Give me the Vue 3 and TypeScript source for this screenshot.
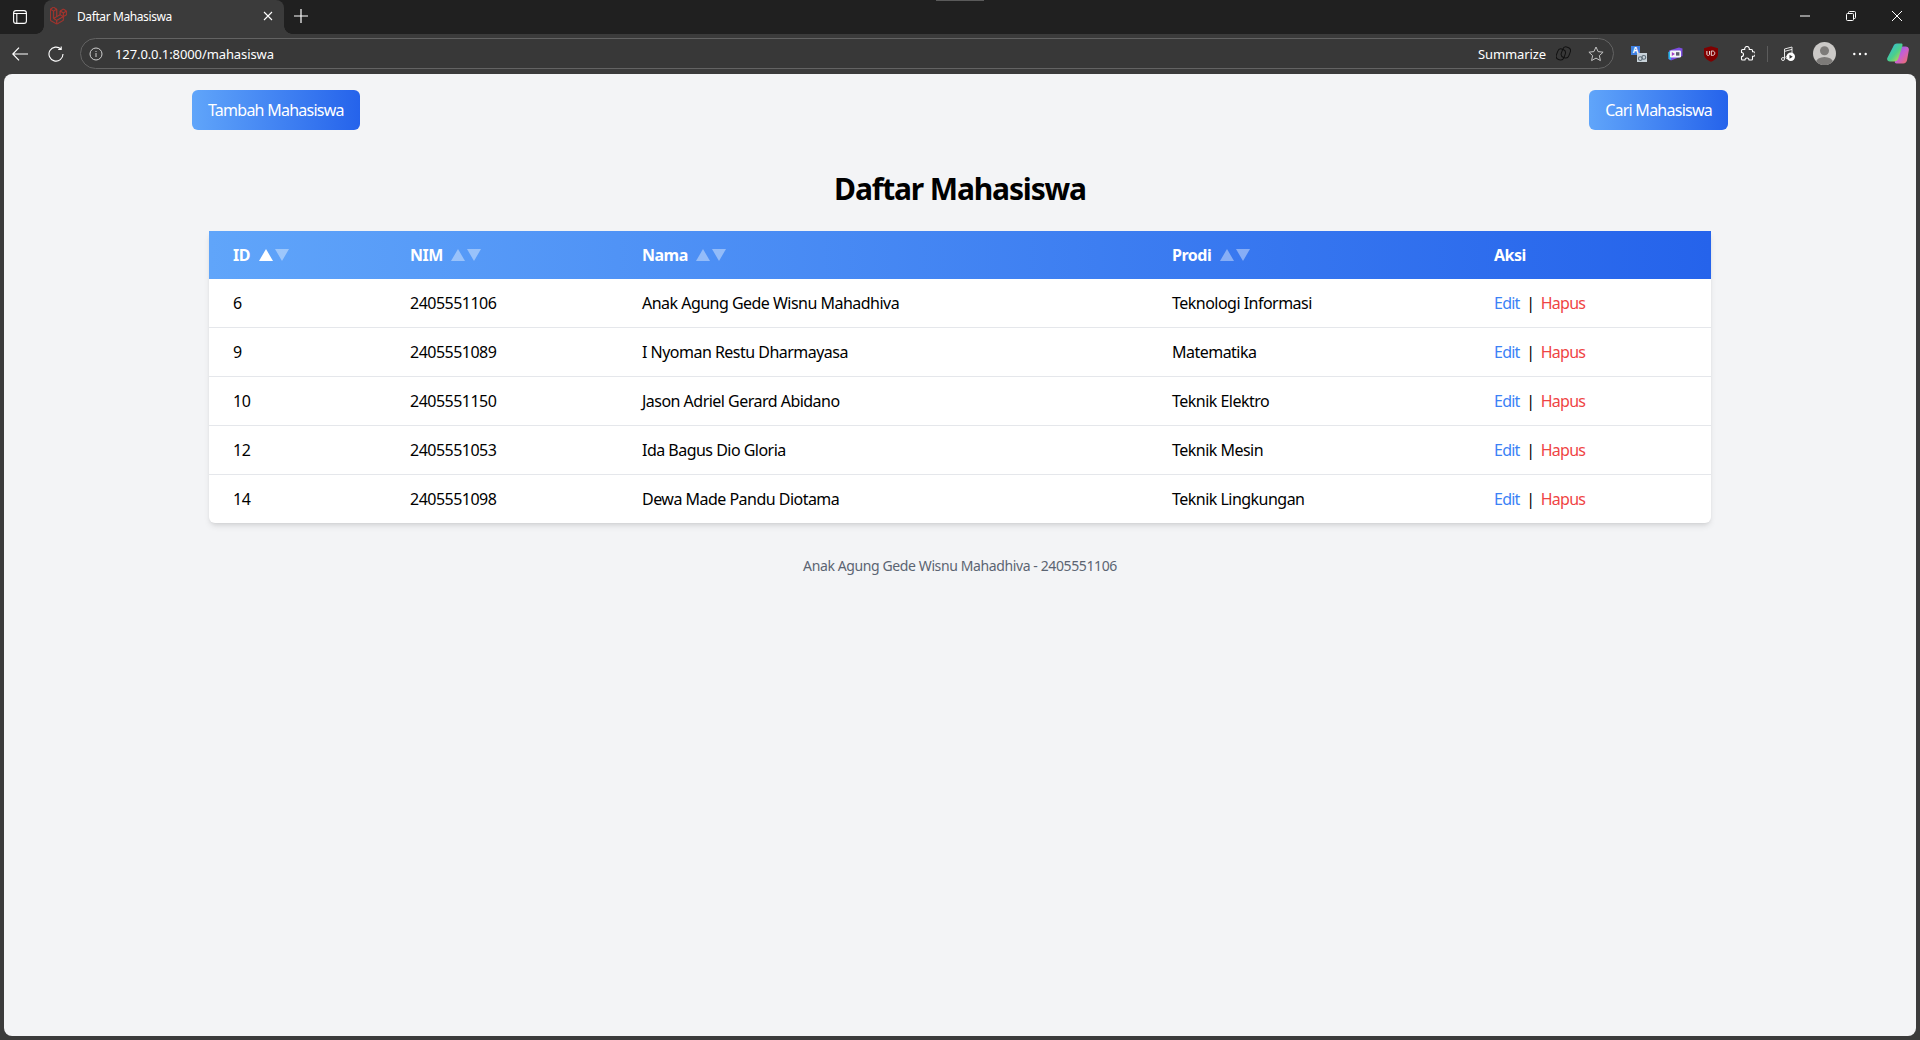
<template>
  <div class="window">
    <!-- tab strip -->
    <div class="tabstrip">
      <span class="snap-handle"></span>
      <button class="strip-btn">
        <svg width="14" height="14" viewBox="0 0 14 14" fill="none" stroke="#fff" stroke-width="1.100">
          <rect x=".6" y=".6" width="12.800" height="12.800" rx="2.400" />
          <path d="M.6 3.500h12.800M3.800 3.500v9.900" />
        </svg>
      </button>
      <div class="tab">
        <svg class="favicon" width="17" height="17.700" viewBox="0 0 50 52" fill="#b8352c" stroke="#b8352c" stroke-width="1.200">
          <path d="M49.626 11.564a.809.809 0 0 1 .028.209v10.972a.8.8 0 0 1-.402.694l-9.209 5.302V39.250c0 .286-.152.55-.4.694L20.420 50.996c-.044.025-.092.041-.14.058-.018.006-.035.017-.054.022a.805.805 0 0 1-.41 0c-.022-.006-.042-.018-.063-.026-.044-.016-.09-.03-.132-.054L.402 39.944A.801.801 0 0 1 0 39.250V6.334c0-.072.01-.142.028-.21.006-.023.02-.044.028-.067.015-.042.029-.085.051-.124.015-.026.037-.047.055-.071.023-.032.044-.065.071-.093.023-.023.053-.04.079-.06.029-.024.055-.05.088-.069h.001l9.610-5.533a.802.802 0 0 1 .8 0l9.610 5.533h.002c.032.02.059.045.088.068.026.02.055.038.078.06.028.029.048.062.072.094.017.024.04.045.054.071.023.04.036.082.052.124.008.023.022.044.028.068a.809.809 0 0 1 .028.209v20.559l8.008-4.611v-10.510c0-.07.01-.141.028-.208.007-.024.02-.045.028-.068.016-.042.03-.085.052-.124.015-.026.037-.047.054-.071.024-.032.044-.065.072-.093.023-.023.052-.04.078-.06.03-.024.056-.05.088-.069h.001l9.611-5.533a.801.801 0 0 1 .8 0l9.610 5.533c.034.02.06.045.09.068.025.02.054.038.077.06.028.029.048.062.072.094.018.024.04.045.054.071.023.039.036.082.052.124.009.023.022.044.028.068zm-1.574 10.718v-9.124l-3.363 1.936-4.646 2.675v9.124l8.010-4.611zm-9.610 16.505v-9.130l-4.570 2.610-13.050 7.448v9.216l17.620-10.144zM1.602 7.719v31.068L19.220 48.930v-9.214l-9.204-5.209-.003-.002-.004-.002c-.031-.018-.057-.044-.086-.066-.025-.02-.054-.036-.076-.058l-.002-.003c-.026-.025-.044-.056-.066-.084-.02-.027-.044-.05-.06-.078l-.001-.003c-.018-.03-.029-.066-.042-.1-.013-.03-.03-.058-.038-.09v-.001c-.01-.038-.012-.078-.016-.117-.004-.03-.012-.06-.012-.09v-.002-21.481L4.965 9.654 1.602 7.720zm8.810-5.994L2.405 6.334l8.005 4.609 8.006-4.610-8.006-4.608zm4.164 28.764l4.645-2.674V7.719l-3.363 1.936-4.646 2.675v20.096l3.364-1.937zM39.243 7.164l-8.006 4.609 8.006 4.609 8.005-4.610-8.005-4.608zm-.801 10.605l-4.646-2.675-3.363-1.936v9.124l4.645 2.674 3.364 1.937v-9.124zM20.020 38.330l11.743-6.704 5.870-3.350-8-4.606-9.211 5.303-8.395 4.833 7.993 4.524z" />
        </svg>
        <span class="tab-title">Daftar Mahasiswa</span>
        <svg class="tab-close" width="10" height="10" viewBox="0 0 10 10" stroke="#fff" stroke-width="1.100">
          <path d="M1 1l8 8M9 1l-8 8" />
        </svg>
      </div>
      <button class="new-tab">
        <svg width="14" height="14" viewBox="0 0 14 14" stroke="#fff" stroke-width="1.200">
          <path d="M7 0v14M0 7h14" />
        </svg>
      </button>
      <div class="win-controls">
        <svg width="10" height="10" viewBox="0 0 10 10" stroke="#fff" stroke-width="1">
          <path d="M0 5h10" />
        </svg>
        <svg width="10" height="10" viewBox="0 0 10 10" fill="none" stroke="#fff" stroke-width="1">
          <rect x=".5" y="2.500" width="7" height="7" rx="1" />
          <path d="M2.500 2.500V1.500a1 1 0 0 1 1-1h5a1 1 0 0 1 1 1v5a1 1 0 0 1-1 1h-1" />
        </svg>
        <svg width="10" height="10" viewBox="0 0 10 10" stroke="#fff" stroke-width="1">
          <path d="M0 0l10 10M10 0L0 10" />
        </svg>
      </div>
    </div>

    <!-- toolbar -->
    <div class="toolbar">
      <svg class="nav-icon" width="16" height="16" viewBox="0 0 16 16" fill="none" stroke="#fff" stroke-width="1.200">
        <path d="M16 8H.8M7 1.600.8 8 7 14.400" />
      </svg>
      <svg class="nav-icon reload" width="16" height="16" viewBox="0 0 16 16" fill="none" stroke="#fff" stroke-width="1.100">
        <path d="M13 3.200A7 7 0 1 0 15 8M13.200.5v3h-3" />
      </svg>
      <div class="omnibox">
        <svg width="14" height="14" viewBox="0 0 14 14" fill="none" stroke="#cfcfcf" stroke-width="1">
          <circle cx="7" cy="7" r="6" />
          <path d="M7 6v4M7 4v1" />
        </svg>
        <span class="url">127.0.0.1:8000/mahasiswa</span>
        <span class="summarize">Summarize</span>
        <svg class="copilot-mono" width="15" height="15" viewBox="0 0 15 15" fill="none" stroke="#111" stroke-width="1">
          <rect x="1" y="3" width="8" height="11" rx="3.600" transform="rotate(20 5 8)" />
          <rect x="6" y="1" width="8" height="11" rx="3.600" transform="rotate(20 10 6)" />
        </svg>
        <svg class="star" width="16" height="16" viewBox="0 0 16 16" fill="none" stroke="#c4c4c4" stroke-width="1">
          <path d="M8 1l2.100 4.600 5 .6-3.700 3.400 1 5L8 12.100 3.600 14.600l1-5L.9 6.200l5-.6z" />
        </svg>
      </div>
      <div class="extensions">
        <span class="ext-slot">
          <svg width="16" height="20" viewBox="0 -2 16 20">
            <rect x="0" y="0" width="9" height="9" fill="#3f7fe0" />
            <text x="4.500" y="7.400" class="ext-letter">A</text>
            <rect x="6" y="7" width="10" height="9" fill="#c9d3da" />
            <circle cx="9.300" cy="12.600" r="1.900" fill="none" stroke="#5a6a75" stroke-width="1.100" />
            <circle cx="12.800" cy="11.400" r="1.900" fill="none" stroke="#5a6a75" stroke-width="1.100" />
          </svg>
        </span>
        <span class="ext-slot">
          <svg width="15" height="14" viewBox="0 0 15 14">
            <path d="M1 3.500 11 .6 14.500 1.500v7.500L3 13.500.5 12z" fill="#7c4de0" />
            <path d="M.3 5 3 4 3 13 .6 12z" fill="#27b6ea" />
            <rect x="2" y="3.500" width="11" height="7" rx="1.200" fill="#f4f4f8" />
            <path d="M3.800 5 7 7 3.800 9z" fill="#a13fc4" />
            <rect x="8" y="5.200" width="3.400" height="3.400" fill="#5a5a6a" />
          </svg>
        </span>
        <span class="ext-slot">
          <svg width="14" height="16" viewBox="0 0 14 16">
            <path d="M0 2.200 7 .3l7 1.900v6c0 3.700-3.500 6-7 7.500-3.500-1.500-7-3.800-7-7.500z" fill="#800000" />
            <path d="M2.900 5v3c0 1 .5 1.500 1.300 1.500S5.500 9 5.500 8V5" fill="none" stroke="#eadede" stroke-width="1" />
            <path d="M7.300 5v4.400h1.200c1.400 0 2.300-.9 2.300-2.200S9.900 5 8.500 5z" fill="none" stroke="#eadede" stroke-width="1" />
          </svg>
        </span>
        <span class="ext-slot">
          <svg width="16" height="16" viewBox="0 0 16 16" fill="none" stroke="#fff" stroke-width="1.100" stroke-linejoin="round">
            <path d="M3.500 3.500H5.800A2.300 2.300 0 1 1 10.200 3.500H12.500A1 1 0 0 1 13.500 4.500V5.800A2.300 2.300 0 1 1 13.500 10.200V13A1 1 0 0 1 12.500 14H10A2 2 0 0 0 6 14H3.500A1 1 0 0 1 2.500 13V10.500A2 2 0 0 0 2.500 6.500V4.500A1 1 0 0 1 3.500 3.500Z" />
          </svg>
        </span>
        <span class="ext-sep"></span>
        <span class="ext-slot">
          <svg width="14" height="15" viewBox="0 0 14 15" fill="none" stroke="#e6e6e6" stroke-width="1">
            <circle cx="2" cy="13" r="1.500" />
            <circle cx="6.200" cy="11.400" r="1.300" />
            <path d="M3.500 13V3L11 1v6" />
            <path d="M3.500 5.400 11 3.400" />
            <circle cx="9.800" cy="10.800" r="4.200" fill="#fff" stroke="none" />
            <path d="M8.500 8.800 11.700 10.800 8.500 12.800z" fill="#333" stroke="none" />
          </svg>
        </span>
        <span class="ext-slot">
          <svg width="23" height="23" viewBox="0 0 23 23">
            <defs>
              <clipPath id="avatar-clip"><circle cx="11.500" cy="11.500" r="11.500" /></clipPath>
            </defs>
            <circle cx="11.500" cy="11.500" r="11.500" fill="#cbc9c7" />
            <g clip-path="url(#avatar-clip)" fill="#7d7b79">
              <circle cx="11.500" cy="8.800" r="4.500" />
              <ellipse cx="11.500" cy="20.500" rx="8.500" ry="5.500" />
            </g>
          </svg>
        </span>
        <span class="ext-slot">
          <svg width="14" height="4" viewBox="0 0 14 4" fill="#fff">
            <circle cx="1.300" cy="2" r="1.200" />
            <circle cx="7" cy="2" r="1.200" />
            <circle cx="12.700" cy="2" r="1.200" />
          </svg>
        </span>
        <span class="ext-slot wide">
          <svg width="22" height="21" viewBox="0 0 22 21">
            <defs>
              <linearGradient id="cop-a" x1="0" y1="0" x2="1" y2="1">
                <stop offset="0" stop-color="#2fb4ef" />
                <stop offset=".55" stop-color="#4bd08a" />
                <stop offset="1" stop-color="#f2cf3a" />
              </linearGradient>
              <linearGradient id="cop-b" x1="0" y1="0" x2="1" y2="1">
                <stop offset="0" stop-color="#6a6cf0" />
                <stop offset=".5" stop-color="#c85fd0" />
                <stop offset="1" stop-color="#f4705a" />
              </linearGradient>
            </defs>
            <path d="M11.500 6.500C12.300 4.300 13.300 3.500 15 3.500h3.500c2.400 0 3.800 1.500 3.300 4l-1.600 9c-.4 2.800-2 4-4 4H9.500c-1.500 0-2-1-1.500-2.500z" fill="url(#cop-b)" />
            <path d="M6 4C6.800 1.500 8.200.5 10 .5h4c1.600 0 1.800 1 1.300 2.500L11.500 15c-.8 2.500-2.200 3.500-4 3.500H3c-2.300 0-3.300-1.600-2.700-3.500z" fill="url(#cop-a)" />
          </svg>
        </span>
      </div>
    </div>

    <!-- page -->
    <main class="page">
      <div class="actions">
        <a class="btn">Tambah Mahasiswa</a>
        <a class="btn">Cari Mahasiswa</a>
      </div>
      <h1 class="title">Daftar Mahasiswa</h1>
      <div class="table-card">
        <table>
          <colgroup>
            <col v-for="w in colWidths" :key="w" :style="{ width: w + 'px' }" />
          </colgroup>
          <thead>
            <tr>
              <th v-for="(h, i) in headers" :key="h">
                {{ h }}
                <span v-if="h !== 'Aksi'" class="sorter">
                  <span class="tri up" :class="{ active: i === 0 }"></span>
                  <span class="tri down"></span>
                </span>
              </th>
            </tr>
          </thead>
          <tbody>
            <tr v-for="m in mahasiswa" :key="m.id">
              <td>{{ m.id }}</td>
              <td>{{ m.nim }}</td>
              <td>{{ m.nama }}</td>
              <td>{{ m.prodi }}</td>
              <td class="aksi">
                <a class="edit">Edit</a>
                <span class="pipe">|</span>
                <a class="hapus">Hapus</a>
              </td>
            </tr>
          </tbody>
        </table>
      </div>
      <p class="footer">Anak Agung Gede Wisnu Mahadhiva - 2405551106</p>
    </main>
  </div>
</template>

<script setup lang="ts">
interface Mahasiswa {
  id: number
  nim: string
  nama: string
  prodi: string
}

const headers = ['ID', 'NIM', 'Nama', 'Prodi', 'Aksi']
const colWidths = [177, 232, 530, 322, 241]

const mahasiswa: Mahasiswa[] = [
  { id: 6, nim: '2405551106', nama: 'Anak Agung Gede Wisnu Mahadhiva', prodi: 'Teknologi Informasi' },
  { id: 9, nim: '2405551089', nama: 'I Nyoman Restu Dharmayasa', prodi: 'Matematika' },
  { id: 10, nim: '2405551150', nama: 'Jason Adriel Gerard Abidano', prodi: 'Teknik Elektro' },
  { id: 12, nim: '2405551053', nama: 'Ida Bagus Dio Gloria', prodi: 'Teknik Mesin' },
  { id: 14, nim: '2405551098', nama: 'Dewa Made Pandu Diotama', prodi: 'Teknik Lingkungan' },
]
</script>

<style>
html,
body {
  margin: 0;
  background: #3b3b3b;
}
</style>

<style scoped>
.window {
  width: 1920px;
  height: 1040px;
  display: flex;
  flex-direction: column;
  background: #3b3b3b;
  overflow: hidden;
  font-family: "Noto Sans", "Open Sans", "Liberation Sans", sans-serif;
}

.tabstrip {
  position: relative;
  height: 34px;
  flex: none;
  display: flex;
  align-items: center;
  background: #202020;
  color: #fff;
}

.snap-handle {
  position: absolute;
  top: 0;
  left: 936px;
  width: 48px;
  height: 1px;
  background: #5a5a5a;
}

.strip-btn {
  width: 40px;
  height: 34px;
  flex: none;
  display: flex;
  align-items: center;
  justify-content: center;
  padding: 0 0 1px;
  border: 0;
  background: none;
}

.tab {
  position: relative;
  width: 240px;
  height: 34px;
  flex: none;
  margin-left: 4px;
  display: flex;
  align-items: center;
  box-sizing: border-box;
  padding: 0 11px 2px 6px;
  background: #3b3b3b;
  border-radius: 8px 8px 0 0;
}

/* outward curves at the foot of the active tab */
.tab::before,
.tab::after {
  content: "";
  position: absolute;
  bottom: 0;
  width: 8px;
  height: 8px;
}

.tab::before {
  left: -8px;
  background: radial-gradient(circle at 0 0, #202020 7.5px, #3b3b3b 8px);
}

.tab::after {
  right: -8px;
  background: radial-gradient(circle at 100% 0, #202020 7.5px, #3b3b3b 8px);
}

.favicon {
  flex: none;
}

.tab-title {
  flex: 1;
  margin-left: 10px;
  font-size: 12px;
  letter-spacing: -0.4px;
}

.new-tab {
  width: 34px;
  height: 34px;
  flex: none;
  display: flex;
  align-items: center;
  justify-content: center;
  padding: 0 0 2px;
  border: 0;
  background: none;
}

.win-controls {
  margin-left: auto;
  padding: 0 18px 2px 0;
  display: flex;
  gap: 36px;
}

.toolbar {
  height: 40px;
  flex: none;
  display: flex;
  align-items: center;
  box-sizing: border-box;
  padding: 4px 0 5px;
  background: #3b3b3b;
}

.nav-icon {
  flex: none;
  margin-left: 12px;
}

.reload {
  margin-left: 20px;
}

.omnibox {
  width: 1534px;
  height: 31px;
  flex: none;
  margin-left: 16px;
  box-sizing: border-box;
  display: flex;
  align-items: center;
  padding: 0 9px 0 8px;
  border: 1px solid #636363;
  border-radius: 16px;
  background: #383838;
  color: #fff;
  font-size: 13px;
}

.url {
  margin-left: 12px;
  flex: 1;
  letter-spacing: -0.1px;
}

.summarize {
  letter-spacing: -0.1px;
}

.copilot-mono {
  margin-left: 10px;
}

.star {
  margin-left: 17px;
}

.extensions {
  flex: 1;
  display: flex;
  align-items: center;
  padding-left: 7px;
}

.ext-slot {
  width: 36px;
  flex: none;
  display: flex;
  align-items: center;
  justify-content: center;
}

.ext-slot.wide {
  width: 40px;
}

.ext-letter {
  font-size: 8px;
  font-weight: 700;
  fill: #fff;
  text-anchor: middle;
}

.ext-sep {
  width: 1px;
  height: 16px;
  flex: none;
  margin: 0 2px;
  background: #5c5c5c;
}

.page {
  flex: 1;
  margin: 0 4px 4px;
  padding: 16px 0 0;
  background: #f3f4f6;
  border-radius: 8px;
  color: #000;
  font-size: 16px;
}

.actions {
  width: 1536px;
  margin: 0 auto;
  display: flex;
  justify-content: space-between;
}

.btn {
  display: block;
  height: 40px;
  padding: 0 16px;
  line-height: 40px;
  letter-spacing: -0.75px;
  color: #fff;
  border-radius: 6px;
  background: linear-gradient(to right, #60a5fa, #2563eb);
}

.title {
  margin: 37px 0 20px;
  text-align: center;
  font-size: 30px;
  line-height: 44px;
  font-weight: 700;
  letter-spacing: -1.15px;
}

.table-card {
  width: 1502px;
  margin: 0 auto;
  border-radius: 0 0 6px 6px;
  overflow: hidden;
  background: #fff;
  box-shadow: 0 4px 6px -1px rgba(0, 0, 0, 0.1), 0 2px 4px -2px rgba(0, 0, 0, 0.1);
}

table {
  width: 100%;
  table-layout: fixed;
  border-collapse: collapse;
}

thead tr {
  background: linear-gradient(to right, #60a5fa, #2563eb);
}

th {
  height: 48px;
  padding: 0 24px;
  box-sizing: border-box;
  text-align: left;
  color: #fff;
  font-weight: 700;
  letter-spacing: -0.5px;
}

.sorter {
  display: inline-flex;
  gap: 2px;
  margin-left: 5px;
}

.tri {
  width: 0;
  height: 0;
  border-left: 7px solid transparent;
  border-right: 7px solid transparent;
  opacity: 0.4;
}

.tri.up {
  border-bottom: 12px solid #fff;
}

.tri.down {
  border-top: 12px solid #fff;
}

.tri.active {
  opacity: 1;
}

td {
  height: 49px;
  padding: 0 24px;
  box-sizing: border-box;
  border-top: 1px solid #e5e7eb;
  letter-spacing: -0.52px;
}

tbody tr:first-child td {
  border-top: 0;
  height: 48px;
}

.aksi {
  letter-spacing: -0.75px;
}

.edit {
  color: #3b82f6;
}

.hapus {
  color: #ef4444;
}

.pipe {
  margin: 0 6.500px;
}

.footer {
  margin: 33px 0 0;
  text-align: center;
  font-size: 14px;
  line-height: 20px;
  letter-spacing: -0.39px;
  color: #5b6472;
}
</style>
